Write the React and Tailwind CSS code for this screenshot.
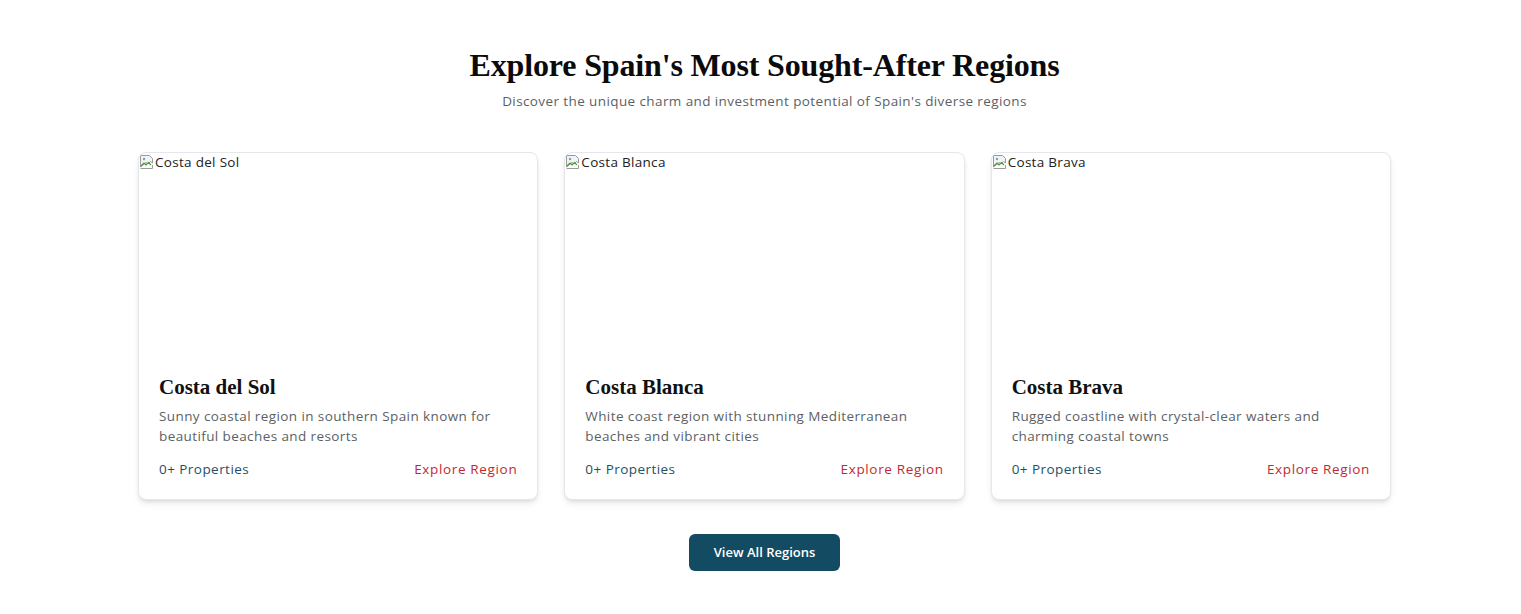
import React from "react";

const REGIONS = [
  {
    name: "Costa del Sol",
    description: "Sunny coastal region in southern Spain known for beautiful beaches and resorts",
    count: 0,
  },
  {
    name: "Costa Blanca",
    description: "White coast region with stunning Mediterranean beaches and vibrant cities",
    count: 0,
  },
  {
    name: "Costa Brava",
    description: "Rugged coastline with crystal-clear waters and charming coastal towns",
    count: 0,
  },
];

const sans = "font-['Open_Sans',sans-serif]";
const serif = "font-['Liberation_Serif','DejaVu_Serif',serif]";

// the placeholder browsers draw for an image that failed to load
function BrokenImage({ alt }) {
  return (
    <span className={`flex items-center pt-[1px] text-[13.5px] leading-4 text-[#222] tracking-[0.3px] ${sans}`}>
      <svg width="16" height="16" viewBox="0 0 16 16" className="shrink-0">
        <path d="M1.5 1.5h9l3 3v4.5l-2-1.5-2.5 2.5-2-1.5-5.5 4.5z" fill="#f3f3f3" stroke="#9a9a9a" />
        <path d="M2 12l3-3 2 2 2.5-2.5L12 11" fill="none" stroke="#4c9a3a" strokeWidth="1.2" />
        <path d="M1.5 14.5h12V11" fill="none" stroke="#9a9a9a" />
        <circle cx="5" cy="5" r="1.2" fill="#6aa4d6" />
      </svg>
      <span>{alt}</span>
    </span>
  );
}

function RegionCard({ region }) {
  return (
    <div className="bg-white border border-gray-200 rounded-lg shadow-md overflow-hidden">
      <div className="h-50">
        <BrokenImage alt={region.name} />
      </div>
      <div className="p-5">
        <h3 className={`${serif} text-[21px] leading-7 font-bold text-[#111] mb-[5px]`}>{region.name}</h3>
        <p className={`${sans} text-[13.5px] leading-5 text-[#5b5f66] tracking-[0.4px]`}>{region.description}</p>
        <div className={`${sans} mt-[13px] flex items-center justify-between text-[13.5px] leading-5`}>
          <span className="text-[#1b5168] tracking-[0.45px]">{region.count}+ Properties</span>
          <a href="#" className="text-[#bf2a31] tracking-[0.65px]">Explore Region</a>
        </div>
      </div>
    </div>
  );
}

export default function App() {
  return (
    <main className="min-h-screen bg-white pt-[47px] pb-10">
      <section className="flex flex-col items-center pl-[8px]">
        <h2 className={`${serif} text-[32px] leading-9 font-bold text-[#0b0b0b] tracking-[-0.15px]`}>
          Explore Spain's Most Sought-After Regions
        </h2>
        <p className={`${sans} mt-[8px] text-[13.5px] leading-5 text-[#5b5f66] tracking-[0.4px]`}>
          Discover the unique charm and investment potential of Spain's diverse regions
        </p>

        <div className="mt-[41px] w-[1253px] grid grid-cols-3 gap-[26px]">
          {REGIONS.map((r) => (
            <RegionCard key={r.name} region={r} />
          ))}
        </div>

        <button
          className={`${sans} mt-[34px] w-[151px] h-[37px] rounded-md bg-[#134b63] text-white text-[13px] font-semibold`}
        >
          View All Regions
        </button>
      </section>
    </main>
  );
}
